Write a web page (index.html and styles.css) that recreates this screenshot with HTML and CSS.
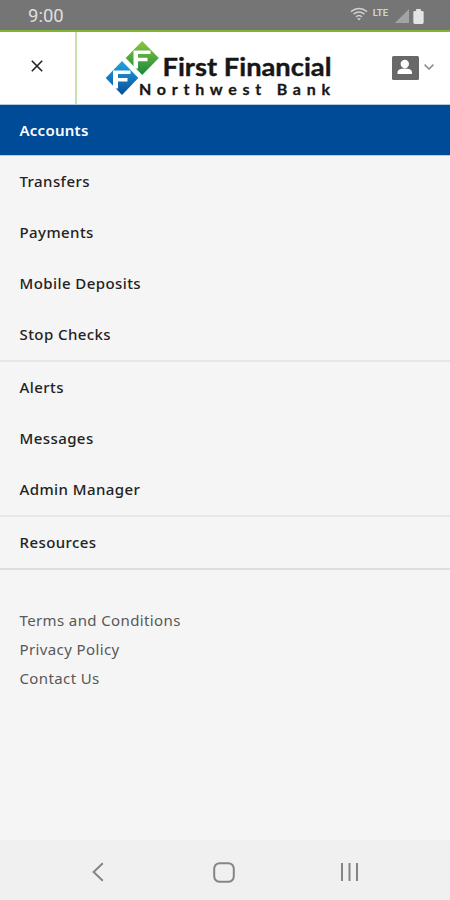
FILE: index.html
```html
<!DOCTYPE html>
<html lang="en">
<head>
    <meta charset="UTF-8">
    <meta name="viewport" content="width=device-width, initial-scale=1.0">
    <title>First Financial Northwest Bank</title>
    <link rel="stylesheet" href="styles.css">
</head>
<body>
    <div class="status-bar">
        <span class="time">9:00</span>
        <div class="status-icons">
            <svg class="wifi" width="18" height="14" viewBox="0 0 18 14" fill="none" stroke="#d2d2d2" stroke-width="1.5">
                <path d="M1 4.6Q9 -1.8 17 4.6M3.6 7.2Q9 2.8 14.4 7.2M6 9.8Q9 7.2 12 9.8"/>
                <path d="M7 11.2h4L9 13.4z" fill="#d2d2d2" stroke="none"/>
            </svg>
            <span class="lte">LTE</span>
            <svg class="signal" width="14" height="14" viewBox="0 0 14 14"><path d="M14 0v14H0z" fill="#a3a3a3"/></svg>
            <svg class="battery" width="11" height="15" viewBox="0 0 11 16"><path d="M3 0h5v2h1.5Q11 2 11 3.5V14.500Q11 16 9.500 16H1.500Q0 16 0 14.500V3.500Q0 2 1.500 2H3z" fill="#e4e4e4"/></svg>
        </div>
    </div>

    <header class="header">
        <button class="close-btn" aria-label="Close menu">
            <svg width="12" height="12" viewBox="0 0 12 12" stroke="#222" stroke-width="1.6"><path d="M.8.8l10.400 10.400M11.200.8L.8 11.200"/></svg>
        </button>
        <div class="brand">
            <svg width="228" height="60" viewBox="0 0 228 60">
                <defs>
                    <linearGradient id="green" x1="0" y1="0" x2="0" y2="1">
                        <stop offset="0" stop-color="#8cc63f"/>
                        <stop offset="1" stop-color="#16883c"/>
                    </linearGradient>
                    <linearGradient id="blue" x1="0" y1="0" x2="0" y2="1">
                        <stop offset="0" stop-color="#22a5e2"/>
                        <stop offset="1" stop-color="#0a4d9c"/>
                    </linearGradient>
                </defs>
                <path d="M37.200 1L53.800 18 37.200 35 20.700 18z" fill="url(#green)"/>
                <path d="M17 21L33.300 38 17 55 .7 38z" fill="url(#blue)"/>
                <path d="M28.500 10.500H45.500V14H33V17.800H42.500V21.300H33V28.500H28.500z" fill="#fff"/>
                <path d="M8 30.500H25.500V34H13V38H22.500V41.500H13V48.500H8z" fill="#fff"/>
                <text class="brand-top" x="57.500" y="36" textLength="169" lengthAdjust="spacingAndGlyphs">First Financial</text>
                <text class="brand-bottom" x="34" y="54.500" textLength="191">Northwest Bank</text>
            </svg>
        </div>
        <button class="profile-btn" aria-label="Profile">
            <svg width="27" height="24" viewBox="0 0 27 24">
                <rect width="27" height="24" rx="1.500" fill="#686868"/>
                <circle cx="12.800" cy="8" r="4.200" fill="#fff"/>
                <path d="M5.500 18v-2.200Q6.500 12.600 12.800 12.600T20 15.800V18z" fill="#fff"/>
            </svg>
            <svg class="arrow" width="10" height="6" viewBox="0 0 10 6" fill="none" stroke="#8a8a8a" stroke-width="1.500"><path d="M.6.6L5 5 9.400.6"/></svg>
        </button>
    </header>

    <nav class="menu">
        <a class="menu-item active">Accounts</a>
        <a class="menu-item">Transfers</a>
        <a class="menu-item">Payments</a>
        <a class="menu-item">Mobile Deposits</a>
        <a class="menu-item">Stop Checks</a>
        <hr>
        <a class="menu-item">Alerts</a>
        <a class="menu-item">Messages</a>
        <a class="menu-item">Admin Manager</a>
        <hr>
        <a class="menu-item">Resources</a>
        <hr class="last">
    </nav>

    <div class="links">
        <a>Terms and Conditions</a>
        <a>Privacy Policy</a>
        <a>Contact Us</a>
    </div>

    <footer class="nav-bar">
        <svg width="12" height="20" viewBox="0 0 12 20" fill="none" stroke="#858585" stroke-width="2"><path d="M10.800 1.200L1.600 10l9.200 8.800"/></svg>
        <svg class="home" width="22" height="21" viewBox="0 0 22 21" fill="none" stroke="#858585" stroke-width="2"><rect x="1.200" y="1.200" width="19.600" height="18.600" rx="5.500"/></svg>
        <svg width="20" height="18" viewBox="0 0 20 18" fill="none" stroke="#858585" stroke-width="2"><path d="M2 0v18M9.500 0v18M17 0v18"/></svg>
    </footer>
</body>
</html>
```

FILE: styles.css
```css
* {
    box-sizing: border-box;
}

body {
    font-family: "Noto Sans", "Open Sans", sans-serif;
    margin: 0;
    background-color: #f5f5f5;
    display: flex;
    flex-direction: column;
    height: 100vh;
    overflow: hidden;
}

.status-bar {
    height: 30px;
    background-color: #757575;
    display: flex;
    justify-content: space-between;
    align-items: center;
    padding: 2px 26px 0 28px;
}

.time {
    font-family: Roboto, sans-serif;
    font-size: 18.5px;
    color: #dedede;
}

.status-icons {
    display: flex;
    align-items: center;
}

.wifi {
    margin-right: 5px;
    margin-top: -4px;
}

.lte {
    font-family: Roboto, sans-serif;
    font-size: 9.5px;
    font-weight: 700;
    line-height: 10px;
    color: #d2d2d2;
    margin: -6px 7px 0 0;
}

.signal {
    margin-right: 4px;
}

.header {
    height: 75px;
    background-color: #fff;
    border-top: 2px solid #7fb52f;
    border-bottom: 1px solid #b4cbdc;
    display: flex;
}

.header button {
    background: none;
    border: none;
    padding: 0;
    cursor: pointer;
}

.header .close-btn {
    width: 77px;
    border-right: 2px solid #c5e3ac;
    display: flex;
    align-items: center;
    justify-content: center;
    padding: 0 1px 5px 0;
}

.brand {
    width: 228px;
    margin: 8px 0 0 28px;
}

.brand svg {
    display: block;
}

.brand-top {
    font-family: Lato, sans-serif;
    font-size: 25px;
    font-weight: 700;
    fill: #171717;
    stroke: #171717;
    stroke-width: 0.4px;
}

.brand-bottom {
    font-family: Lato, sans-serif;
    font-size: 16px;
    font-weight: 700;
    fill: #171717;
    stroke: #171717;
    stroke-width: 0.3px;
}

.header .profile-btn {
    margin-left: 59px;
    display: flex;
    align-items: center;
    gap: 5px;
}

.arrow {
    margin-top: -3px;
}

.menu {
    display: flex;
    flex-direction: column;
}

.menu-item {
    height: 51px;
    padding: 0 19px 2px 19.5px;
    display: flex;
    align-items: center;
    font-size: 15px;
    font-weight: 500;
    letter-spacing: 0.42px;
    color: #222;
}

.menu-item.active {
    background-color: #004b97;
    border-bottom: 1px solid #b9cce0;
    color: #fff;
    font-weight: 600;
    letter-spacing: 0.25px;
    padding-bottom: 0;
}

.menu hr {
    width: 100%;
    height: 2px;
    margin: 0;
    border: none;
    background-color: #e7e7e7;
}

.menu hr.last {
    background-color: #dedede;
}

.links {
    display: flex;
    flex-direction: column;
    flex: 1;
    padding: 36px 19px 0 19.5px;
}

.links a {
    font-size: 15px;
    line-height: 29px;
    letter-spacing: 0.38px;
    color: #585858;
}

.nav-bar {
    height: 60px;
    background-color: #f0f0f0;
    display: flex;
    align-items: center;
    justify-content: space-between;
    padding: 4px 90px 0 92px;
}

.home {
    margin-left: 4px;
}
```
